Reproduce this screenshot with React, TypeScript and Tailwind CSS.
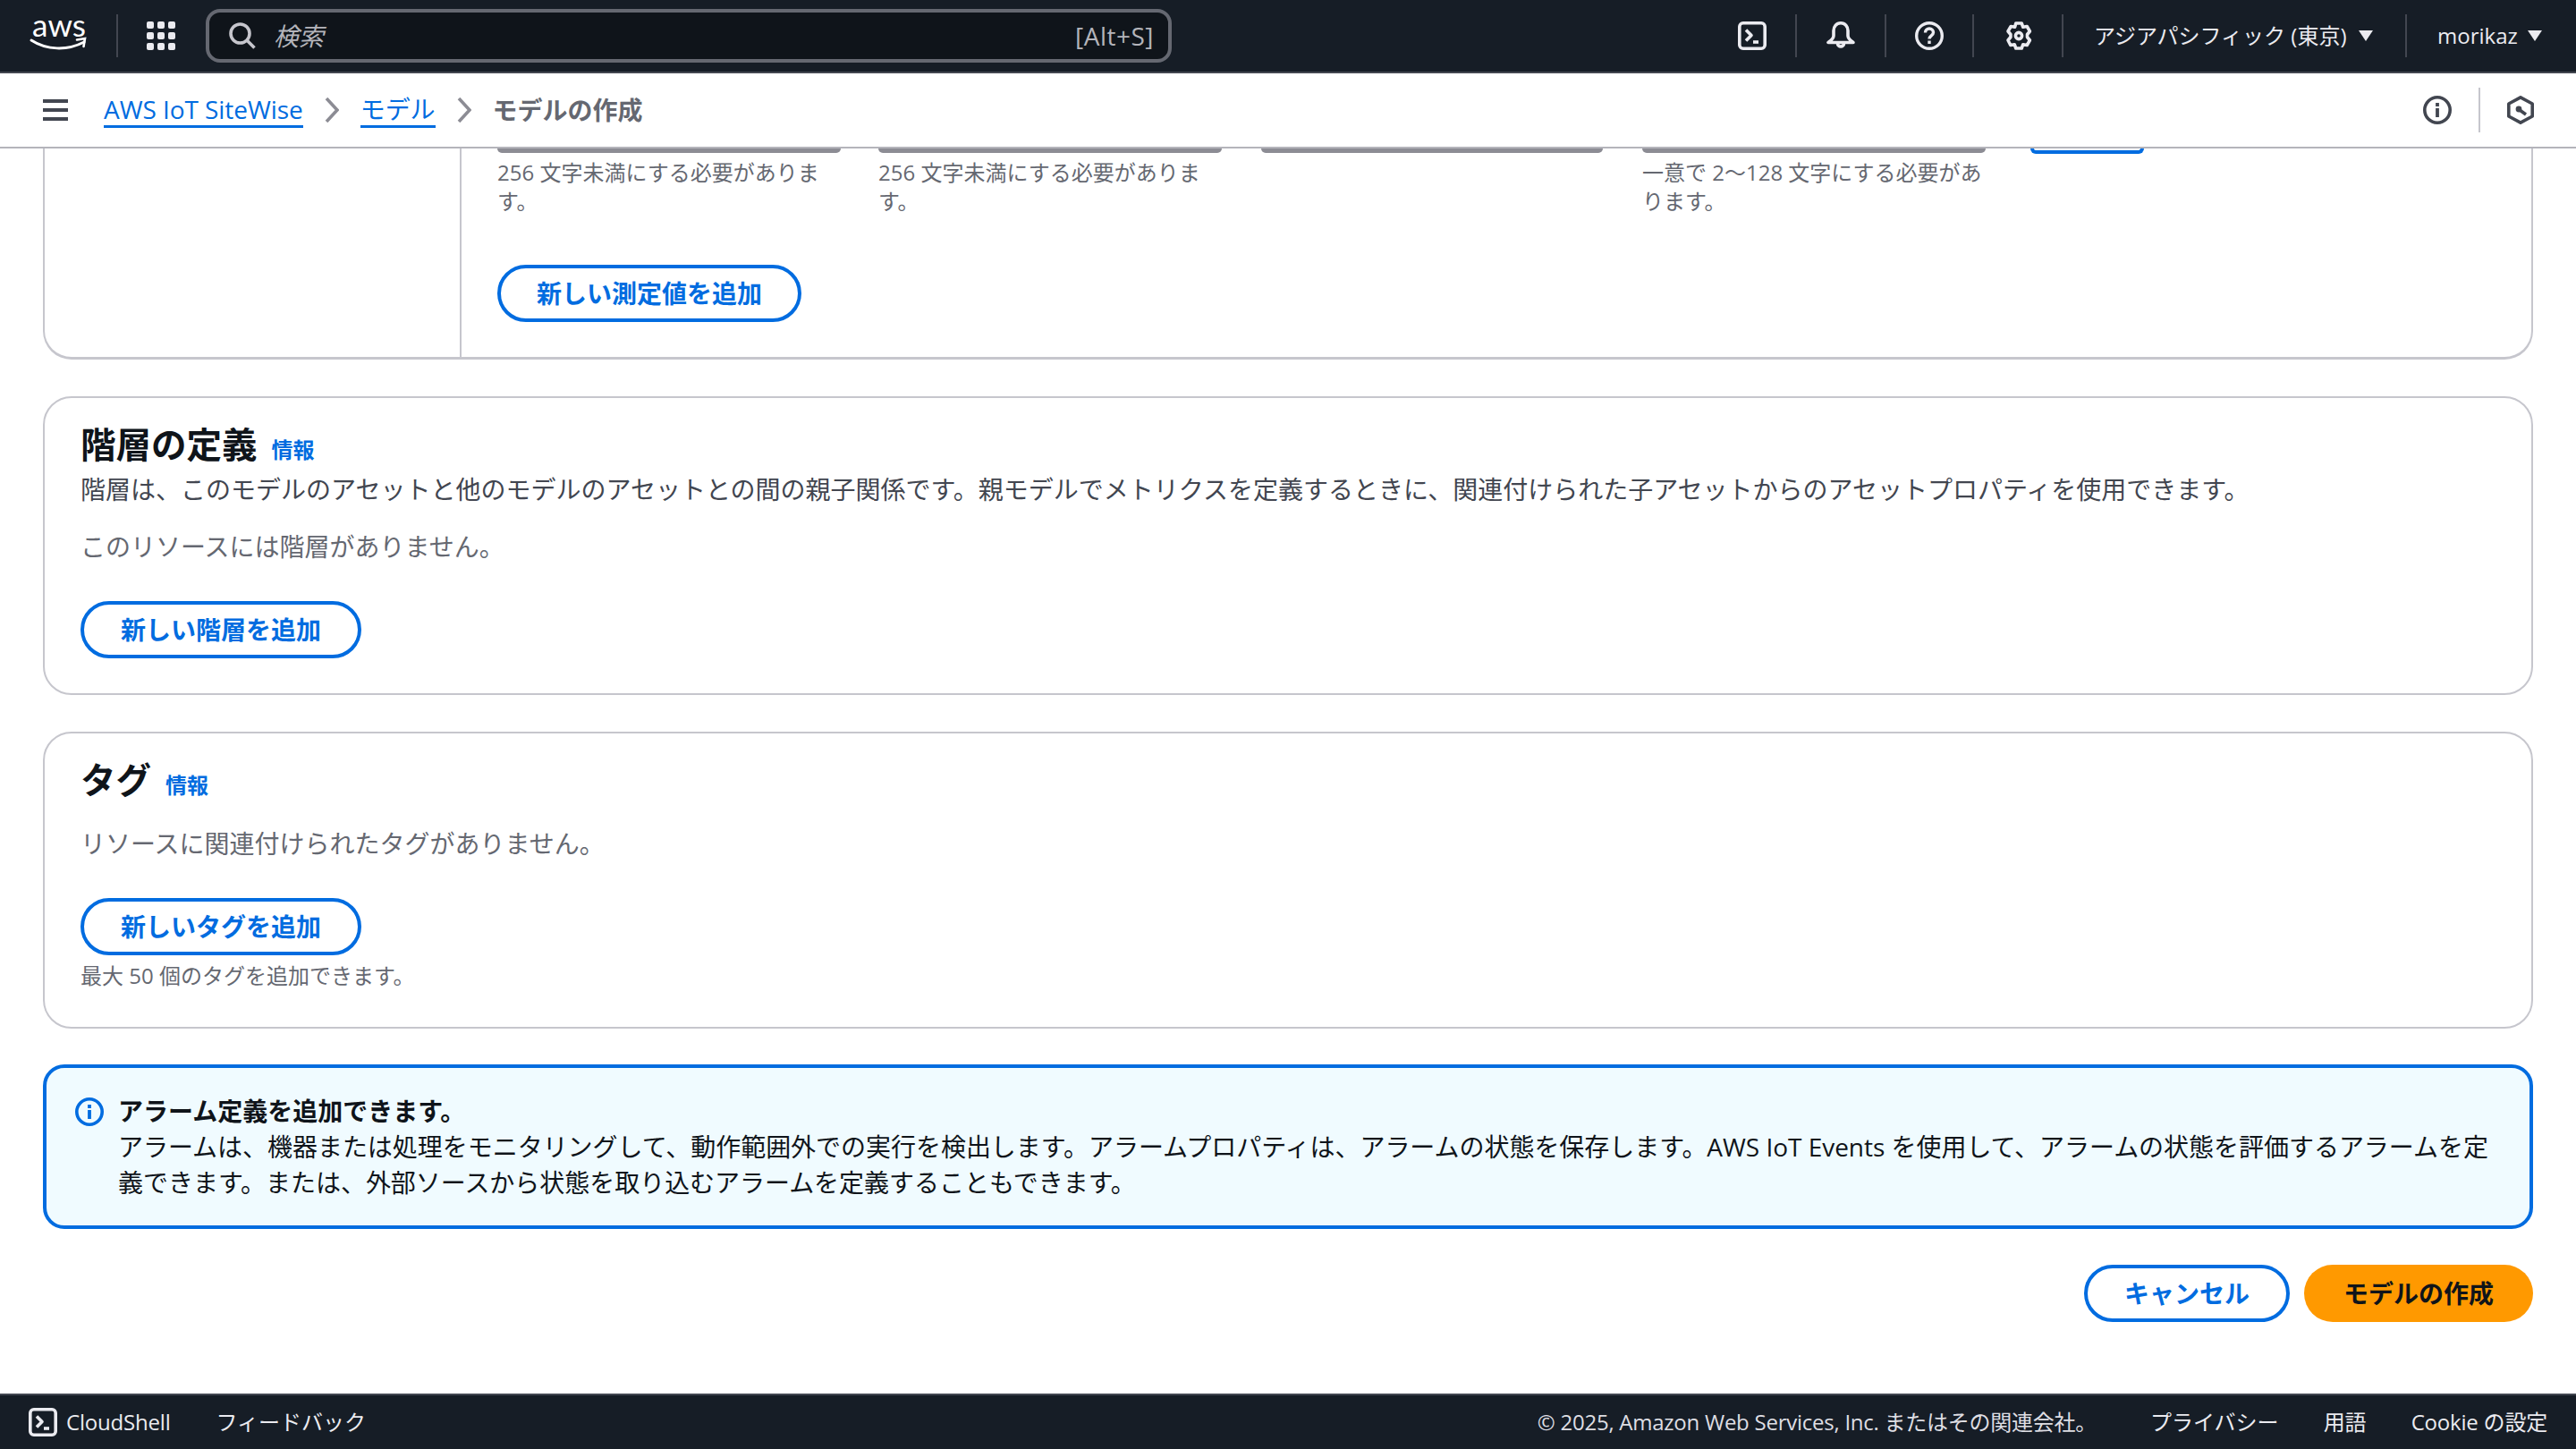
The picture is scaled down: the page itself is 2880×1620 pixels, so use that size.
import React from "react";

function Terminal({ cls }: { cls: string }) {
  return (
    <svg viewBox="0 0 32 32" className={cls} fill="none" stroke="currentColor" strokeWidth="3.600" strokeLinejoin="round">
      <rect x="1.800" y="1.800" width="28.400" height="28.400" rx="4" />
      <path d="M9 9.500 15 15.500 9 21.500" />
      <path d="M17 23h6" />
    </svg>
  );
}

function Caret({ cls }: { cls: string }) {
  return (
    <svg viewBox="0 0 16 14" className={cls} fill="currentColor">
      <path d="M0 1h16L8 13z" />
    </svg>
  );
}

function Sep() {
  return <div className="h-[48px] w-[2px] shrink-0 bg-[#424650]" />;
}

function Crumb({ children }: { children: React.ReactNode }) {
  return <span className="border-b-[3px] border-[#006ce0] text-[28px] leading-[36px] tracking-[-0.06px] text-[#006ce0]">{children}</span>;
}

function Chevron() {
  return (
    <svg viewBox="0 0 16 28" className="mx-[24px] h-[28px] w-[16px] shrink-0" fill="none" stroke="#8c8c94" strokeWidth="3.600">
      <path d="M2 1l12 13L2 27" />
    </svg>
  );
}

function OutlineBtn({ children, cls }: { children: React.ReactNode; cls: string }) {
  return (
    <button className={"h-[64px] rounded-[40px] border-[4px] border-[#006ce0] bg-white text-[28px] leading-[40px] font-bold text-[#006ce0] " + cls}>
      {children}
    </button>
  );
}

function Stub({ cls }: { cls: string }) {
  return <div className={cls} />;
}

export default function App() {
  return (
    <div
      className="flex h-[1620px] w-[2880px] flex-col overflow-hidden bg-white text-[#0f141a]"
      style={{ fontFamily: '"Open Sans", "Noto Sans CJK JP", sans-serif' }}
    >
      <header className="flex h-[82px] shrink-0 items-center border-b-[2px] border-[#424650] bg-[#161d26] text-[#ebebf0]">
        <div className="flex w-[130px] shrink-0 justify-end pr-[32px]">
          <svg viewBox="0 0 64 40" className="h-[40px] w-[64px] overflow-visible">
            <text x="32" y="21" textAnchor="middle" fontFamily="Lato, sans-serif" fontSize="35" fill="#ffffff">aws</text>
            <path d="M1 25c17 11 40 12 59 2" fill="none" stroke="#ffffff" strokeWidth="3" strokeLinecap="round" />
            <path d="M52 24.500l9-1.500-1.500 9" fill="none" stroke="#ffffff" strokeWidth="2.600" strokeLinecap="round" />
          </svg>
        </div>
        <Sep />
        <div className="ml-[32px] grid w-[32px] shrink-0 grid-cols-3 gap-[4px]">
          {[0, 1, 2, 3, 4, 5, 6, 7, 8].map((i) => (
            <span key={i} className="h-[8px] w-[8px] rounded-[2px] bg-[#ebebf0]" />
          ))}
        </div>
        <div className="ml-[34px] flex h-[60px] w-[1080px] shrink-0 items-center rounded-[16px] border-[4px] border-[#656871] bg-[#0f141a] pr-[16px] pl-[22px]">
          <svg viewBox="0 0 30 30" className="h-[30px] w-[30px] shrink-0" fill="none" stroke="#c6c6cd" strokeWidth="3.600">
            <circle cx="12.500" cy="12.500" r="10.500" />
            <path d="M20 20l8.500 8.500" />
          </svg>
          <span className="ml-[20px] text-[28px] leading-[36px] text-[#b4b4bb] italic">検索</span>
          <span className="ml-auto text-[28px] leading-[36px] tracking-[0.5px] text-[#b4b4bb]">[Alt+S]</span>
        </div>
        <div className="ml-auto flex items-center">
          <div className="flex w-[100px] justify-center pl-[4px]">
            <Terminal cls="h-[32px] w-[32px]" />
          </div>
          <Sep />
          <div className="flex w-[98px] justify-center">
            <svg viewBox="0 0 32 32" className="h-[32px] w-[32px]" fill="none" stroke="currentColor" strokeWidth="3.600" strokeLinejoin="round" strokeLinecap="round">
              <path d="M16 1.800c-5 0-8 4-8 8.500v5.700c0 3-3 5.500-6 7.500h28c-3-2-6-4.500-6-7.500v-5.700c0-4.500-3-8.500-8-8.500z" />
              <path d="M12.500 24.500a3.500 3.500 0 0 0 7 0" />
            </svg>
          </div>
          <Sep />
          <div className="flex w-[96px] justify-center">
            <svg viewBox="0 0 32 32" className="h-[32px] w-[32px]" fill="none" stroke="currentColor" strokeWidth="3.400">
              <circle cx="16" cy="16" r="14.300" />
              <path d="M11.500 12.500c0-2.800 2-4.500 4.500-4.500s4.500 1.700 4.500 4.300c0 3.700-4.500 3.500-4.500 7.200" />
              <path d="M16 21.500v3.500" />
            </svg>
          </div>
          <Sep />
          <div className="flex w-[98px] justify-center pl-[2px]">
            <svg viewBox="0 0 32 32" className="h-[32px] w-[32px]" fill="none" stroke="currentColor" strokeWidth="3.600" strokeLinejoin="round">
              <circle cx="16" cy="16" r="3.600" />
              <path d="M12.800 2h6.400l1.600 4.300 4.400-.8 3.200 5.500-2.900 3.500v3l2.900 3.500-3.200 5.500-4.400-.8L19.200 30h-6.400l-1.600-4.300-4.400.8L4 21l2.900-3.500v-3L4 11l3.200-5.500 4.400.8z" />
            </svg>
          </div>
          <Sep />
          <div className="flex w-[382px] items-center justify-between pr-[36px] pl-[34px]">
            <span className="text-[24px] leading-[32px] whitespace-nowrap">アジアパシフィック (東京)</span>
            <Caret cls="h-[14px] w-[16px]" />
          </div>
          <Sep />
          <div className="flex w-[189px] items-center justify-between pr-[38px] pl-[34px]">
            <span className="text-[24px] leading-[32px]">morikaz</span>
            <Caret cls="h-[14px] w-[16px]" />
          </div>
        </div>
      </header>

      <nav className="flex h-[84px] shrink-0 items-center border-b-[2px] border-[#b4b4bb] pl-[48px]">
        <svg viewBox="0 0 28 24" className="mr-[40px] h-[24px] w-[28px] shrink-0" fill="#424650">
          <path d="M0 0h28v4H0zM0 10h28v4H0zM0 20h28v4H0z" />
        </svg>
        <Crumb>AWS IoT SiteWise</Crumb>
        <Chevron />
        <Crumb>モデル</Crumb>
        <Chevron />
        <span className="text-[28px] leading-[36px] font-bold text-[#656871]">モデルの作成</span>
        <div className="ml-auto flex items-center text-[#424650]">
          <svg viewBox="0 0 32 32" className="h-[32px] w-[32px]" fill="none" stroke="currentColor" strokeWidth="3.600">
            <circle cx="16" cy="16" r="14.200" />
            <path d="M16 14v10M16 8v4" strokeWidth="3.800" />
          </svg>
          <div className="mx-[30px] h-[50px] w-[2px] bg-[#c6c6cd]" />
          <svg viewBox="0 0 30 32" className="mr-[47px] h-[32px] w-[30px]" fill="none" stroke="currentColor" strokeWidth="3.600" strokeLinejoin="round">
            <path d="M15 1.800 28.200 9v14L15 30.200 1.800 23V9z" />
            <circle cx="13" cy="15" r="3.400" fill="currentColor" stroke="none" />
            <path d="M14 16l7 5" />
          </svg>
        </div>
      </nav>

      <main className="flex flex-1 flex-col px-[48px]">
        <section className="flex h-[236px] rounded-b-[32px] border-x-[2px] border-b-[3px] border-[#c6c6cd]">
          <div className="w-[466px] shrink-0 border-r-[2px] border-[#c6c6cd]" />
          <div className="flex-1 pl-[40px]">
            <div className="flex">
              <div className="w-[384px]">
                <Stub cls="h-[5px] rounded-b-[8px] bg-[#8c8c94]" />
                <p className="mt-[6px] text-[24px] leading-[32px] text-[#656871]">256 文字未満にする必要があります。</p>
              </div>
              <div className="ml-[42px] w-[384px]">
                <Stub cls="h-[5px] rounded-b-[8px] bg-[#8c8c94]" />
                <p className="mt-[6px] text-[24px] leading-[32px] text-[#656871]">256 文字未満にする必要があります。</p>
              </div>
              <div className="ml-[44px] w-[382px]">
                <Stub cls="h-[5px] rounded-b-[8px] bg-[#8c8c94]" />
              </div>
              <div className="ml-[44px] w-[384px]">
                <Stub cls="h-[5px] rounded-b-[8px] bg-[#8c8c94]" />
                <p className="mt-[6px] text-[24px] leading-[32px] text-[#656871]">一意で 2～128 文字にする必要があります。</p>
              </div>
              <div className="ml-[50px] w-[127px]">
                <Stub cls="h-[6px] rounded-b-[24px] border-x-[4px] border-b-[4px] border-[#006ce0]" />
              </div>
            </div>
            <div className="mt-[55px]">
              <OutlineBtn cls="w-[340px]">新しい測定値を追加</OutlineBtn>
            </div>
          </div>
        </section>

        <section className="mt-[41px] h-[334px] rounded-[32px] border-[2px] border-[#c6c6cd] px-[40px] pt-[28px]">
          <div className="flex h-[48px] items-baseline">
            <h2 className="text-[39.500px] leading-[48px] font-bold">階層の定義</h2>
            <span className="ml-[16px] text-[24px] leading-[32px] font-bold text-[#006ce0]">情報</span>
          </div>
          <p className="mt-[6px] text-[28px] leading-[40px] whitespace-nowrap text-[#424650]">
            階層は、このモデルのアセットと他のモデルのアセットとの間の親子関係です。親モデルでメトリクスを定義するときに、関連付けられた子アセットからのアセットプロパティを使用できます。
          </p>
          <p className="mt-[24px] text-[28px] leading-[40px] text-[#656871]">このリソースには階層がありません。</p>
          <div className="mt-[41px]">
            <OutlineBtn cls="w-[314px]">新しい階層を追加</OutlineBtn>
          </div>
        </section>

        <section className="mt-[41px] h-[332px] rounded-[32px] border-[2px] border-[#c6c6cd] px-[40px] pt-[28px]">
          <div className="flex h-[48px] items-baseline">
            <h2 className="text-[39.500px] leading-[48px] font-bold">タグ</h2>
            <span className="ml-[16px] text-[24px] leading-[32px] font-bold text-[#006ce0]">情報</span>
          </div>
          <p className="mt-[27px] text-[28px] leading-[40px] text-[#656871]">リソースに関連付けられたタグがありません。</p>
          <div className="mt-[41px] flex">
            <OutlineBtn cls="w-[314px]">新しいタグを追加</OutlineBtn>
          </div>
          <p className="mt-[7px] text-[24px] leading-[32px] text-[#656871]">最大 50 個のタグを追加できます。</p>
        </section>

        <section className="mt-[40px] flex h-[184px] rounded-[24px] border-[4px] border-[#006ce0] bg-[#f0fbff] pt-[28px] pr-[40px] pl-[32px]">
          <svg viewBox="0 0 32 32" className="mt-[5px] h-[32px] w-[32px] shrink-0" fill="none" stroke="#006ce0" strokeWidth="3.600">
            <circle cx="16" cy="16" r="14.200" />
            <path d="M16 14v10M16 8v4" strokeWidth="3.800" />
          </svg>
          <div className="ml-[16px] text-[28px] leading-[40px]">
            <div className="font-bold">アラーム定義を追加できます。</div>
            <div className="tracking-[-0.03px]">
              アラームは、機器または処理をモニタリングして、動作範囲外での実行を検出します。アラームプロパティは、アラームの状態を保存します。AWS IoT Events を使用して、アラームの状態を評価するアラームを定義できます。または、外部ソースから状態を取り込むアラームを定義することもできます。
            </div>
          </div>
        </section>

        <div className="mt-[40px] flex justify-end gap-[16px]">
          <OutlineBtn cls="w-[230px]">キャンセル</OutlineBtn>
          <button className="h-[64px] rounded-[40px] bg-[#ff9900] px-[44px] text-[28px] leading-[40px] font-bold text-[#0f141a]">
            モデルの作成
          </button>
        </div>
      </main>

      <footer className="flex h-[62px] shrink-0 items-center border-t-[2px] border-[#424650] bg-[#161d26] pr-[32px] pl-[32px] text-[24px] leading-[32px] text-[#ebebf0]">
        <Terminal cls="h-[32px] w-[32px] shrink-0" />
        <span className="ml-[10px] tracking-[-0.2px]">CloudShell</span>
        <span className="ml-[51px]">フィードバック</span>
        <span className="ml-auto tracking-[-0.25px] text-[#dedee3]">© 2025, Amazon Web Services, Inc. またはその関連会社。</span>
        <span className="ml-[60px]">プライバシー</span>
        <span className="ml-[50px]">用語</span>
        <span className="ml-[50px] tracking-[-0.2px]">Cookie の設定</span>
      </footer>
    </div>
  );
}
